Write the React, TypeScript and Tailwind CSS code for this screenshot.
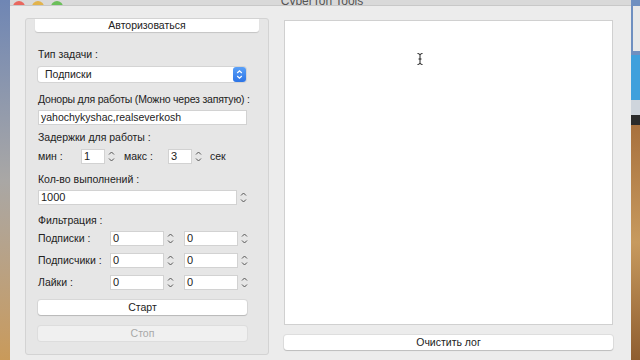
import React from 'react';

const font = { fontFamily: '"Liberation Sans", "Noto Sans", sans-serif' };

function Stepper() {
  return (
    <svg width="7" height="13" viewBox="0 0 7 13" className="shrink-0">
      <path d="M1 4.5 L3.5 2 L6 4.5" fill="none" stroke="#555" strokeWidth="1" />
      <path d="M1 8.5 L3.5 11 L6 8.5" fill="none" stroke="#555" strokeWidth="1" />
    </svg>
  );
}

function Spin({ value, w }: { value: string; w: string }) {
  return (
    <div className="flex items-center gap-[3px]">
      <div className={`${w} h-[15px] bg-white border border-[#d2d2d2] pl-[2px] text-[11px] leading-[13px] text-[#222]`}>{value}</div>
      <Stepper />
    </div>
  );
}

function FilterRow({ label }: { label: string }) {
  return (
    <div className="flex items-center h-[15px]">
      <span className="w-[72px] whitespace-nowrap text-[10.5px] text-[#222]">{label}</span>
      <Spin value="0" w="w-[54px]" />
      <div className="w-[10px]" />
      <Spin value="0" w="w-[54px]" />
    </div>
  );
}

export default function App() {
  return (
    <div className="w-[640px] h-[360px] flex overflow-hidden" style={font}>
      {/* desktop left */}
      <div className="w-[10px] h-full bg-gradient-to-b from-[#6f86b4] via-[#a9a7a5] to-[#c99a5a]" />

      {/* window */}
      <div className="w-[621px] h-full flex flex-col bg-[#ececec]">
        <div className="h-[6px] bg-[#d9d9d9] border-b border-[#c8c8c8] flex items-end overflow-hidden">
          <div className="flex gap-[7px] pl-[3px] items-end mb-[-8px]">
            <div className="w-[12px] h-[12px] rounded-full bg-[#e9675e]" />
            <div className="w-[12px] h-[12px] rounded-full bg-[#e2b34c]" />
            <div className="w-[12px] h-[12px] rounded-full bg-[#6bbf5a]" />
          </div>
          <div className="flex-1 text-center text-[12px] leading-[12px] mb-[-2px] text-[#555] pr-[50px]">CyberTon Tools</div>
        </div>

        <div className="flex flex-1 pt-[12px] pl-[15px]">
          {/* left group */}
          <div className="w-[244px] h-[337px] border border-[#d3d3d3] bg-[#e6e6e6] rounded-[3px] flex flex-col px-[12px] whitespace-nowrap">
            <div className="mx-[-3px] h-[13px] bg-white rounded-b-[3px] shadow-[0_1px_1px_rgba(0,0,0,0.15)] text-[10.5px] leading-[13px] text-center text-[#222]">Авторизоваться</div>

            <div className="mt-[15px] text-[10.5px] leading-[14px] text-[#222]">Тип задачи :</div>
            <div className="mt-[6px] h-[15px] w-[208px] flex bg-white rounded-[3px] shadow-[0_0_0_1px_rgba(0,0,0,0.08)]">
              <div className="flex-1 pl-[7px] text-[10.5px] leading-[15px] text-[#222]">Подписки</div>
              <div className="w-[13px] h-[15px] rounded-[3px] bg-gradient-to-b from-[#5aa0f7] to-[#2d74e6] flex items-center justify-center">
                <svg width="7" height="11" viewBox="0 0 7 11">
                  <path d="M1.2 4 L3.5 1.8 L5.8 4" fill="none" stroke="#fff" strokeWidth="1.2" />
                  <path d="M1.2 7 L3.5 9.2 L5.8 7" fill="none" stroke="#fff" strokeWidth="1.2" />
                </svg>
              </div>
            </div>

            <div className="mt-[10px] text-[10.5px] leading-[14px] tracking-[-0.2px] text-[#222]">Доноры для работы (Можно через запятую) :</div>
            <div className="mt-[4px] h-[15px] w-[209px] bg-white border border-[#d2d2d2] pl-[2px] text-[10.5px] leading-[13px] text-[#222]">yahochykyshac,realseverkosh</div>

            <div className="mt-[5px] text-[10.5px] leading-[14px] text-[#222]">Задержки для работы :</div>
            <div className="mt-[5px] flex items-center h-[15px]">
              <span className="w-[43px] text-[10.5px] text-[#222]">мин :</span>
              <Spin value="1" w="w-[24px]" />
              <span className="ml-[9px] w-[44px] text-[10.5px] text-[#222]">макс :</span>
              <Spin value="3" w="w-[24px]" />
              <span className="ml-[8px] text-[10.5px] text-[#222]">сек</span>
            </div>

            <div className="mt-[8px] text-[10.5px] leading-[14px] text-[#222]">Кол-во выполнений :</div>
            <div className="mt-[4px] flex items-center gap-[3px]">
              <div className="w-[199px] h-[15px] bg-white border border-[#d2d2d2] pl-[2px] text-[11px] leading-[13px] text-[#222]">1000</div>
              <Stepper />
            </div>

            <div className="mt-[8px] text-[10.5px] leading-[14px] text-[#222]">Фильтрация :</div>
            <div className="mt-[4px] flex flex-col gap-[7px]">
              <FilterRow label="Подписки :" />
              <FilterRow label="Подписчики :" />
              <FilterRow label="Лайки :" />
            </div>

            <div className="mt-[10px] h-[15px] w-[209px] bg-white rounded-[3px] shadow-[0_0_0_1px_rgba(0,0,0,0.06),0_1px_1px_rgba(0,0,0,0.15)] text-[10.5px] leading-[15px] text-center text-[#222]">Старт</div>
            <div className="mt-[11px] h-[15px] w-[209px] bg-[#f0f0f0] rounded-[3px] shadow-[0_0_0_1px_rgba(0,0,0,0.04)] text-[10.5px] leading-[15px] text-center text-[#a8a8a8]">Стоп</div>
          </div>

          {/* right side */}
          <div className="ml-[15px] w-[329px] flex flex-col">
            <div className="relative h-[305px] bg-white border border-[#d0d0d0] mt-[2px]">
              <svg className="absolute left-[132px] top-[32px]" width="6" height="12" viewBox="0 0 6 12">
                <path d="M0.5 0.5 Q3 0.5 3 2 L3 10 Q3 11.5 0.5 11.5 M5.5 0.5 Q3 0.5 3 2 M3 10 Q3 11.5 5.5 11.5 M1.5 6 L4.5 6" fill="none" stroke="#222" strokeWidth="1" />
              </svg>
            </div>
            <div className="mt-[10px] h-[15px] bg-white rounded-[3px] shadow-[0_0_0_1px_rgba(0,0,0,0.06),0_1px_1px_rgba(0,0,0,0.15)] text-[10.5px] leading-[15px] text-center text-[#222]">Очистить лог</div>
          </div>
        </div>
      </div>

      {/* desktop right */}
      <div className="flex-1 h-full flex flex-col">
        <div className="h-[55px] bg-[#6f8fc0] flex flex-col">
          <div className="mt-[6px] ml-[2px] h-[45px] bg-[#e8e8e8]" />
        </div>
        <div className="h-[45px] bg-[#3fa0dc]" />
        <div className="h-[15px] bg-[#cfd5dc]" />
        <div className="h-[10px] bg-[#2b2b2b]" />
        <div className="flex-1 bg-gradient-to-b from-[#a8713e] via-[#c79a5e] to-[#8f5e30]" />
      </div>
    </div>
  );
}
